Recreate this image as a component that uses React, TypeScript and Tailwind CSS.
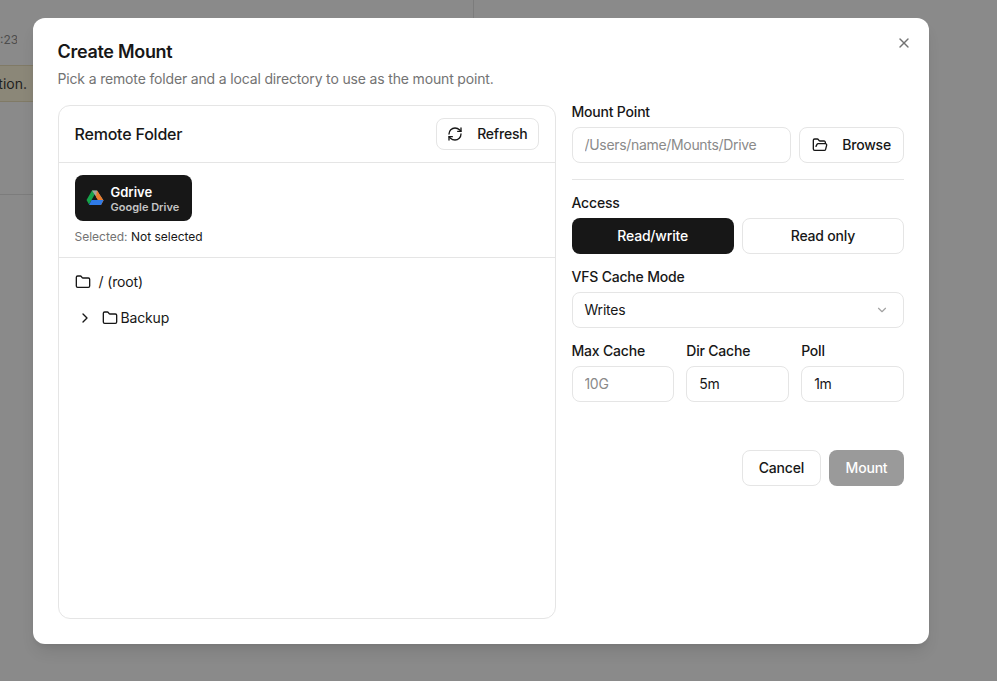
import { ChevronDown, ChevronRight, Folder, FolderOpen, RefreshCw, X } from 'lucide-react';

const fieldClass = 'h-9 w-full rounded-lg border border-[#e5e5e5] bg-white px-3 pb-[2px] text-sm tracking-[-0.32px] text-[#171717] outline-none placeholder:text-[#8a8a8a]';
const labelClass = 'text-sm font-medium leading-5 tracking-[-0.2px] text-[#171717]';
const btnText = 'text-sm font-medium tracking-[-0.2px]';

const DriveLogo = () => (
  <svg width="18" height="16" viewBox="0 0 18 16">
    <path d="M6 0.5h5L5.5 10 3 14.5 0.5 10z" fill="#16a34a" />
    <path d="M6 0.5h5l6.5 10h-5z" fill="#a8a29e" />
    <path d="M11 0.5l6.5 10-2.5 4.5-5-8z" fill="#ea7c2c" />
    <path d="M5.5 10h12L15 15H3z" fill="#2f7be8" />
  </svg>
);

const App = () => {
  return (
    <div className="relative h-[681px] w-[997px] overflow-hidden bg-[#8a8a8a] font-['Inter',sans-serif]">
      {/* dimmed page behind the dialog */}
      <div className="absolute left-[473px] top-0 h-[18px] w-px bg-[#7c7c7c]" />
      <div className="absolute left-0 top-[194px] h-px w-[33px] bg-[#7c7c7c]" />
      <div className="absolute left-0 top-[32px] w-[17px] overflow-hidden text-right text-xs leading-4 text-[#4d4d4d]">:23</div>
      <div className="absolute left-0 top-[65px] flex h-[37px] w-[33px] items-center justify-end border-y border-[#807a66] bg-[#8b8778] pr-[6px] text-sm text-[#1f1f1f]">tion.</div>

      <div className="absolute left-[33px] top-[18px] flex h-[626px] w-[896px] flex-col rounded-xl bg-white pb-[25px] pl-[24.5px] pr-[25px] pt-6 shadow-lg">
        <button className="absolute right-[17px] top-[17px] text-[#737373]">
          <X size={16} />
        </button>
        <h2 className="text-lg font-semibold leading-[20px] tracking-[-0.3px] text-[#171717]">Create Mount</h2>
        <p className="mt-[7px] text-sm leading-5 tracking-[-0.16px] text-[#737373]">Pick a remote folder and a local directory to use as the mount point.</p>

        <div className="mt-4 flex min-h-0 flex-1 gap-4">
          <div className="flex w-[498px] flex-col rounded-xl border border-[#e5e5e5]">
            <div className="flex h-[57px] items-center justify-between border-b border-[#e5e5e5] px-4">
              <span className="text-base font-medium tracking-[-0.2px] text-[#171717]">Remote Folder</span>
              <button className={`flex h-8 items-center gap-[14px] rounded-lg border border-[#e5e5e5] px-[10px] text-[#171717] ${btnText}`}>
                <RefreshCw size={16} />
                Refresh
              </button>
            </div>
            <div className="border-b border-[#e5e5e5] px-4 pb-3 pt-3">
              <div className="flex h-[46px] w-[117px] items-center gap-[7px] rounded-lg bg-[#171717] pl-[11px]">
                <DriveLogo />
                <div className="flex flex-col pt-[2px]">
                  <span className="text-[13px] font-semibold leading-[16px] text-white">Gdrive</span>
                  <span className="text-[11px] font-semibold leading-[14px] text-[#c4c4c4]">Google Drive</span>
                </div>
              </div>
              <div className="mt-2 text-xs leading-4 text-[#171717]">
                <span className="text-[#737373]">Selected: </span>Not selected
              </div>
            </div>
            <div className="flex flex-col gap-1 px-4 py-2 text-sm tracking-[-0.15px] text-[#171717]">
              <div className="flex h-8 items-center gap-2">
                <Folder size={16} />
                / (root)
              </div>
              <div className="flex h-8 items-center pl-[2px]">
                <ChevronRight size={16} />
                <Folder size={16} className="ml-[9px] mr-[3px]" />
                Backup
              </div>
            </div>
          </div>

          <div className="-mt-[3px] flex flex-1 flex-col">
            <label className={labelClass}>Mount Point</label>
            <div className="mt-[5px] flex gap-2">
              <input className={`${fieldClass} flex-1`} placeholder="/Users/name/Mounts/Drive" />
              <button className={`flex h-9 items-center gap-[14px] rounded-lg border border-[#e5e5e5] px-[12px] text-[#171717] ${btnText}`}>
                <FolderOpen size={16} />
                Browse
              </button>
            </div>
            <div className="mt-4 h-px bg-[#e5e5e5]" />
            <label className={`${labelClass} mt-[13px]`}>Access</label>
            <div className="mt-[5px] grid grid-cols-2 gap-2">
              <button className={`h-9 rounded-lg bg-[#171717] text-white ${btnText}`}>Read/write</button>
              <button className={`h-9 rounded-lg border border-[#e5e5e5] text-[#171717] ${btnText}`}>Read only</button>
            </div>
            <label className={`${labelClass} mt-[13px]`}>VFS Cache Mode</label>
            <div className="mt-[5px] flex h-9 items-center justify-between rounded-lg border border-[#e5e5e5] pl-3 pr-[14px] text-sm tracking-[-0.2px] text-[#171717]">
              Writes
              <ChevronDown size={14} className="text-[#a3a3a3]" />
            </div>
            <div className="mt-[13px] grid grid-cols-3 gap-3">
              <div className="flex flex-col gap-[5px]">
                <label className={labelClass}>Max Cache</label>
                <input className={fieldClass} placeholder="10G" />
              </div>
              <div className="flex flex-col gap-[5px]">
                <label className={labelClass}>Dir Cache</label>
                <input className={fieldClass} defaultValue="5m" />
              </div>
              <div className="flex flex-col gap-[5px]">
                <label className={labelClass}>Poll</label>
                <input className={fieldClass} defaultValue="1m" />
              </div>
            </div>
            <div className="mt-12 flex justify-end gap-2">
              <button className={`h-9 rounded-lg border border-[#e5e5e5] px-4 text-[#171717] ${btnText}`}>Cancel</button>
              <button className={`h-9 w-[75px] rounded-lg bg-[#9a9a9a] text-white ${btnText}`}>Mount</button>
            </div>
          </div>
        </div>
      </div>
    </div>
  );
};

export default App;
